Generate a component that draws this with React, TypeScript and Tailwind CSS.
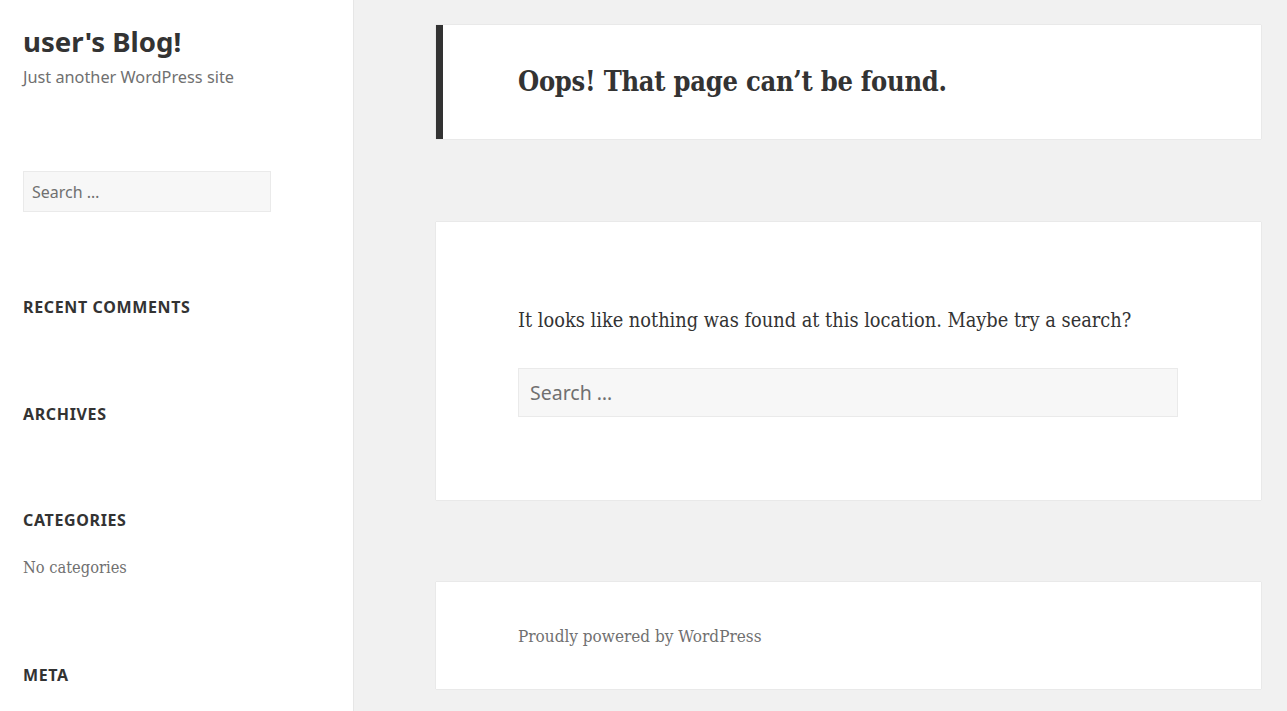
import React from 'react';

const sans = 'font-["Noto_Sans",sans-serif]';
const serif = 'font-["DejaVu_Serif",serif] [font-stretch:condensed]';

const WidgetTitle: React.FC<{ children: React.ReactNode; className?: string }> = ({ children, className }) => (
  <h2 className={`text-[16px] leading-[24px] font-bold uppercase tracking-[0.04em] text-[#333] ${className ?? ''}`}>{children}</h2>
);

export default function App() {
  return (
    <div className={`flex min-h-[711px] bg-[#f1f1f1] ${sans}`}>
      {/* Sidebar */}
      <aside className="w-[354px] shrink-0 bg-white border-r border-[#e6e6e6] pl-[23px] pt-[25px]">
        <h1 className="text-[27.6px] leading-[32px] font-bold text-[#333]">user's Blog!</h1>
        <p className="mt-[8px] text-[16.3px] leading-[24px] text-[#707070]">Just another WordPress site</p>

        <div className="mt-[82px] w-[248px] h-[41px] bg-[#f7f7f7] border border-[#eaeaea] flex items-center px-[8px] text-[16px] text-[#707070]">
          Search …
        </div>

        <WidgetTitle className="mt-[83px]">Recent Comments</WidgetTitle>
        <WidgetTitle className="mt-[83px]">Archives</WidgetTitle>
        <WidgetTitle className="mt-[82px]">Categories</WidgetTitle>
        <p className={`mt-[24px] text-[16.3px] leading-[24px] text-[#707070] ${serif}`}>No categories</p>
        <WidgetTitle className="mt-[83px]">Meta</WidgetTitle>
      </aside>

      {/* Main */}
      <main className="flex-1 pl-[82px] pr-[26px] pt-[25px]">
        <header className="h-[114px] bg-white border-l-[7px] border-[#333] shadow-[0_0_1px_rgba(0,0,0,0.2)] flex items-center pl-[75px]">
          <h1 className={`text-[27px] leading-[36px] font-bold tracking-[-0.25px] text-[#333] ${serif}`}>Oops! That page can’t be found.</h1>
        </header>

        <section className="mt-[83px] h-[278px] bg-white shadow-[0_0_1px_rgba(0,0,0,0.2)] px-[82px] pt-[85px]">
          <p className={`text-[19.8px] leading-[28px] text-[#333] ${serif}`}>It looks like nothing was found at this location. Maybe try a search?</p>
          <div className="mt-[33px] w-[660px] h-[49px] bg-[#f7f7f7] border border-[#eaeaea] flex items-center px-[11px] text-[19.5px] text-[#707070]">
            Search …
          </div>
        </section>

        <footer className="mt-[82px] h-[107px] bg-white shadow-[0_0_1px_rgba(0,0,0,0.2)] flex items-center px-[82px]">
          <p className={`text-[17px] leading-[24px] text-[#707070] ${serif}`}>Proudly powered by WordPress</p>
        </footer>
      </main>
    </div>
  );
}
